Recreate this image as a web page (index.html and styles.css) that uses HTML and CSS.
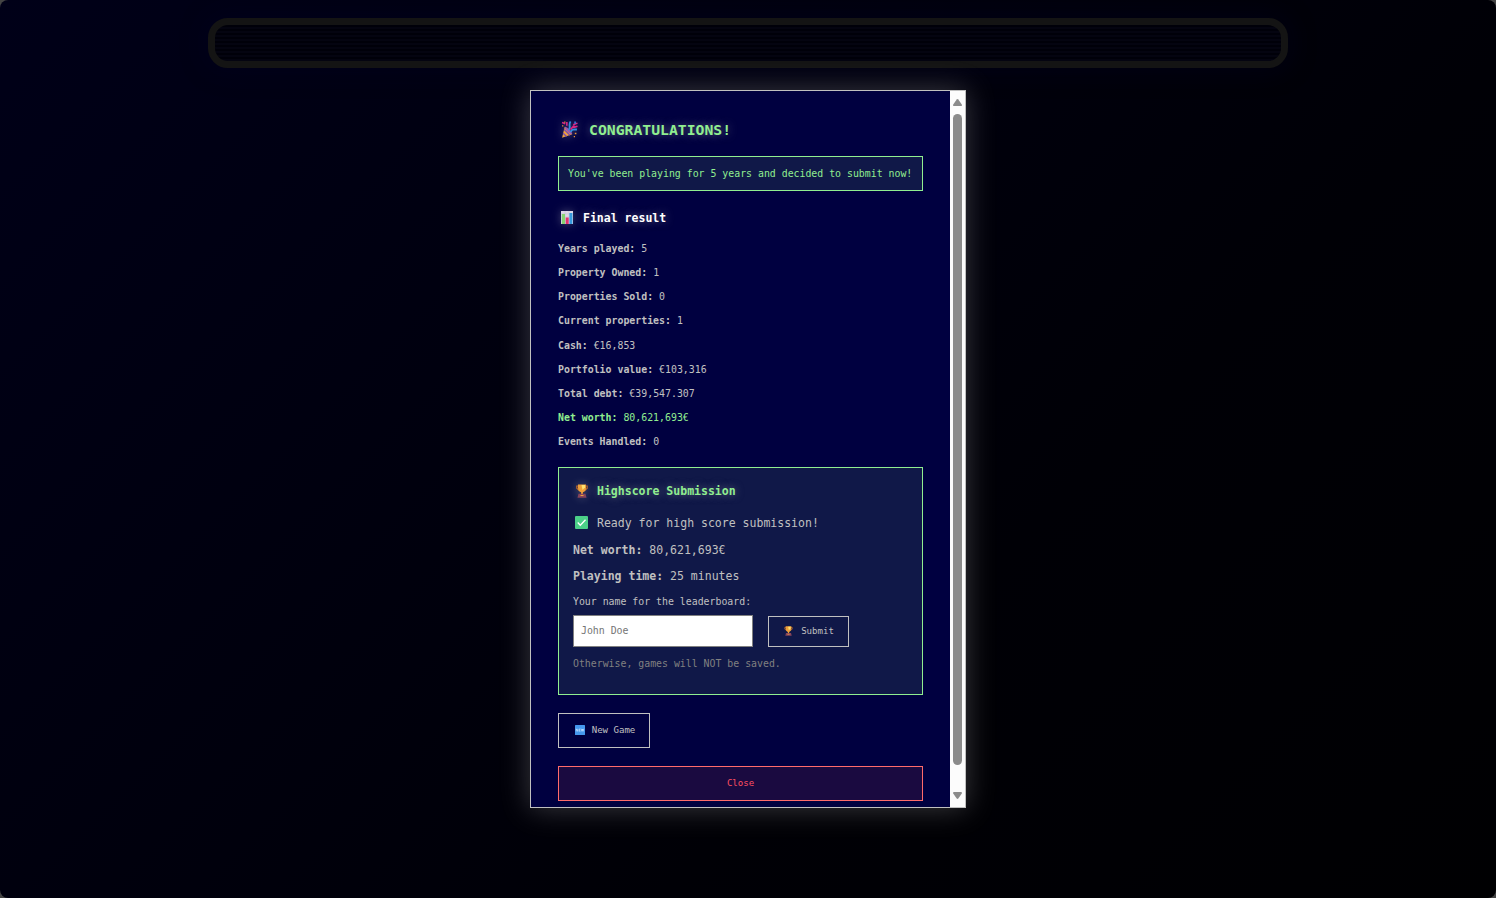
FILE: index.html
```html
<!DOCTYPE html>
<html lang="en">
<head>
    <meta charset="UTF-8">
    <meta name="viewport" content="width=device-width, initial-scale=1.0">
    <title>Congratulations</title>
    <link rel="stylesheet" href="styles.css">
</head>
<body>
    <svg class="defs" width="0" height="0">
        <symbol id="trophy" viewBox="0 0 12 14">
            <path d="M2.500 2H.8v2.200L3 6.400M9.500 2h1.700v2.200L9 6.400" fill="none" stroke="#b9652c" stroke-width="1.200"/>
            <path d="M2 .5h8v3.500C10 6.500 8.500 8 6.900 8.300V10H5.100V8.300C3.500 8 2 6.500 2 4z" fill="#eda03a"/>
            <path d="M5.500 1H9v2.500L6.500 6z" fill="#ffe070"/>
            <path d="M2.500 9.700h7l1 4h-9z" fill="#87445a"/>
            <path d="M4.500 11h3v1h-3z" fill="#e8a040"/>
        </symbol>
    </svg>
    <div class="screen">
        <header class="monitor"></header>
        <div class="modal">
            <div class="content">
                <h2>
                    <svg class="party" viewBox="0 0 16 16">
                        <path d="M3.500 5.500L10.500 12.500 1 15.700z" fill="#f0a03c"/>
                        <path d="M3 8l5.500 5.300M2 11.500l3.200 3" stroke="#7a4fae" stroke-width="1.300"/>
                        <path d="M3.500 5.500c2-.5 7.500 5 7 7-2 .5-7.500-5-7-7z" fill="#9a58b0"/>
                        <path d="M7 8.500C10 7 6.500 3.500 9 .5M9.500 10.500c-.5-3 4-2.500 5.500-2.500" fill="none" stroke="#2f8fe0" stroke-width="1.700"/>
                        <path d="M9 8l3.500-4M1 1.500l3 1M5.500 1v3.500M11.500 3.500l4-1.500M12 6l3.500-1" fill="none" stroke="#d82886" stroke-width="1.500"/>
                        <path d="M3 .5h1.200v1.200H3zM13 11h1.500v1.500H13zM12 14h1.200v1.200H12zM1 4h1.200v1.200H1z" fill="#e8953a"/>
                        <path d="M12.500.5h1.500v2h-1.500z" fill="#3b7ce0"/>
                    </svg>
                    CONGRATULATIONS!
                </h2>
                <p class="notice">You've been playing for 5 years and decided to submit now!</p>
                <h3>
                    <svg class="chart" viewBox="0 0 12 13">
                        <path d="M0 0h12v13H0z" fill="#dcd8e8"/>
                        <path d="M0 3h12M0 6h12M0 9h12M4 0v13M8 0v13" stroke="#c3bfd3" stroke-width=".5"/>
                        <path d="M.8 3h3.200v10H.8z" fill="#86d472"/>
                        <path d="M4.700 6.500h3V13h-3z" fill="#e5316f"/>
                        <path d="M8.400 2h3v11h-3z" fill="#369be0"/>
                    </svg>
                    Final result
                </h3>
                <ul class="stats">
                    <li><strong>Years played:</strong> 5</li>
                    <li><strong>Property Owned:</strong> 1</li>
                    <li><strong>Properties Sold:</strong> 0</li>
                    <li><strong>Current properties:</strong> 1</li>
                    <li><strong>Cash:</strong> €16,853</li>
                    <li><strong>Portfolio value:</strong> €103,316</li>
                    <li><strong>Total debt:</strong> €39,547.307</li>
                    <li class="worth"><strong>Net worth:</strong> 80,621,693€</li>
                    <li><strong>Events Handled:</strong> 0</li>
                </ul>
                <section class="highscore">
                    <h4><svg class="cup"><use href="#trophy"/></svg>Highscore Submission</h4>
                    <p class="ready">
                        <svg class="check" viewBox="0 0 13 13">
                            <rect width="13" height="13" rx="1" fill="#4bcf88"/>
                            <path d="M2.700 6.500l2.600 2.800 5.200-5.500" fill="none" stroke="#fff" stroke-width="1.300"/>
                        </svg>
                        Ready for high score submission!
                    </p>
                    <p><strong>Net worth:</strong> 80,621,693€</p>
                    <p><strong>Playing time:</strong> 25 minutes</p>
                    <label for="playerName">Your name for the leaderboard:</label>
                    <div class="entry">
                        <input id="playerName" type="text" placeholder="John Doe">
                        <button class="button submit"><svg class="small-cup"><use href="#trophy"/></svg>Submit</button>
                    </div>
                    <p class="hint">Otherwise, games will NOT be saved.</p>
                </section>
                <button class="button new-game">
                    <svg class="new" viewBox="0 0 10 10">
                        <rect width="10" height="10" rx=".5" fill="#4598ed"/>
                        <path d="M1.200 6.400V3.800l1.500 2.600V3.800M5.500 4H4.100v2.200h1.400M4.100 5.100h1.200M6.300 3.800l.6 2.500.6-2.300.6 2.300.6-2.500" fill="none" stroke="#d5eaff" stroke-width=".6"/>
                    </svg>
                    New Game
                </button>
                <button class="button close">Close</button>
            </div>
            <div class="scrollbar">
                <svg width="9" height="7" viewBox="0 0 9 7"><path d="M3.700.5Q4.500-.4 5.300.5L8.800 5.400Q9.300 7 8 7H1Q-.3 7 .2 5.400z" fill="#8b8b8b"/></svg>
                <div class="thumb"></div>
                <svg width="9" height="7" viewBox="0 0 9 7"><path d="M3.700 6.500Q4.500 7.400 5.300 6.500L8.800 1.600Q9.300 0 8 0H1Q-.3 0 .2 1.600z" fill="#8b8b8b"/></svg>
            </div>
        </div>
    </div>
</body>
</html>
```

FILE: styles.css
```css
* {
    box-sizing: border-box;
    margin: 0;
    padding: 0;
}
body {
    background-color: #444;
    font-family: "DejaVu Sans Mono", monospace;
    color: #c0c0c0;
    overflow: hidden;
}
.defs {
    position: absolute;
}
.screen {
    height: 898px;
    padding-top: 18px;
    border-radius: 8px;
    background: linear-gradient(135deg, #000018 0%, #00000c 45%, #000006 65%, #000002 100%);
    overflow: hidden;
}
.monitor {
    width: 1080px;
    height: 50px;
    margin: 0 auto 22px;
    border: 7px solid #141414;
    border-radius: 20px;
    background: repeating-linear-gradient(#000009 0 2px, #040410 2px 4px);
    box-shadow: 0 0 28px rgba(0, 0, 40, 0.4);
}
.modal {
    display: flex;
    width: 436px;
    height: 718px;
    margin: 0 auto;
    border: 1px solid #c0c0c0;
    background-color: #000040;
    box-shadow: 0 0 27px rgba(192, 192, 192, 0.3);
    overflow: hidden;
}
.content {
    display: flex;
    flex-direction: column;
    align-items: flex-start;
    width: 419px;
    padding: 26px 27px 0;
}
h2, h3, h4, .ready {
    display: flex;
    align-items: center;
}
h2 {
    height: 24px;
    margin-bottom: 15px;
    font-size: 14.75px;
    color: #90ee90;
    text-shadow: 0 0 9px rgba(192, 192, 192, 0.5);
}
.party {
    width: 17px;
    height: 17px;
    margin: 0 11px 0 3px;
}
.notice {
    width: 365px;
    height: 35px;
    padding-left: 9px;
    border: 1px solid #90ee90;
    background-color: #101848;
    color: #90ee90;
    font-size: 9.87px;
    line-height: 33px;
    white-space: nowrap;
}
h3, h4 {
    font-size: 11.52px;
    text-shadow: 0 0 9px rgba(192, 192, 192, 0.5);
}
h3 {
    height: 20px;
    margin: 17px 0 9px;
    color: #fff;
}
.party, .chart, .cup {
    filter: drop-shadow(0 0 4px rgba(192, 192, 192, 0.35));
}
.chart {
    width: 12px;
    height: 13px;
    margin: 0 10px 1px 3px;
}
.stats {
    margin-bottom: 13px;
    list-style: none;
    font-size: 9.88px;
    line-height: 24.12px;
}
.worth {
    color: #90ee90;
}
.highscore {
    width: 365px;
    height: 228px;
    padding: 13px 14px;
    border: 1px solid #90ee90;
    background-color: #101848;
    font-size: 11.52px;
}
h4 {
    height: 20px;
    margin-bottom: 9px;
    color: #90ee90;
}
.cup {
    width: 12px;
    height: 14px;
    margin: 0 9px 1px 3px;
}
.check {
    width: 13px;
    height: 13px;
    margin: 0 9px 1px 2px;
}
.highscore p {
    height: 26px;
    line-height: 26px;
}
.highscore .ready {
    margin-bottom: 1px;
}
label {
    display: block;
    height: 24px;
    font-size: 9.87px;
    line-height: 25px;
}
.entry {
    display: flex;
    align-items: flex-end;
    gap: 15px;
    margin-top: 3px;
}
input {
    width: 180px;
    height: 32px;
    margin-top: -1px;
    padding: 0 7px 2px;
    border: 1px solid #808080;
    background-color: #fff;
    font: 9.87px "DejaVu Sans Mono", monospace;
}
input::placeholder {
    color: #757575;
}
.highscore .hint {
    margin-top: 4px;
    color: #808080;
    font-size: 9.87px;
}
.button {
    display: flex;
    align-items: center;
    justify-content: center;
    padding-bottom: 2px;
    border: 1px solid #c0c0c0;
    background-color: transparent;
    color: #c0c0c0;
    font: 9.05px "DejaVu Sans Mono", monospace;
    cursor: pointer;
}
.submit {
    width: 81px;
    height: 31px;
}
.small-cup {
    width: 9px;
    height: 10px;
    margin: 0 8px 0 1px;
}
.new-game {
    width: 92px;
    height: 35px;
    margin: 18px 0;
}
.new {
    width: 10px;
    height: 10px;
    margin: 0 7px 0 2px;
}
.close {
    width: 365px;
    height: 35px;
    border-color: #ff6b6b;
    background-color: #1a0a40;
    color: #ff4f60;
}
.scrollbar {
    display: flex;
    flex-direction: column;
    align-items: center;
    width: 15px;
    padding: 8px 0;
    background-color: #fcfcfc;
}
.thumb {
    width: 9px;
    height: 651px;
    margin: 8px 0 27px;
    border-radius: 5px;
    background-color: #8b8b8b;
}
```
